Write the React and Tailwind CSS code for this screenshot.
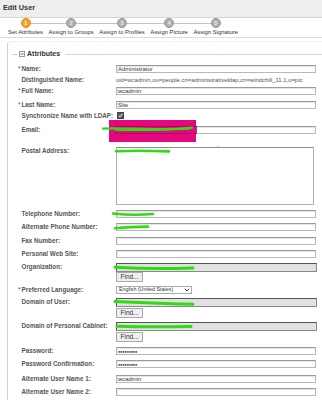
import React from 'react';

const steps = ['Set Attributes', 'Assign to Groups', 'Assign to Profiles', 'Assign Picture', 'Assign Signature'];

const Row = ({ label, req, h, children, labelClass = '' }) => (
  <div className={`flex items-start ${h}`}>
    <div className={`w-[108px] pl-[10px] flex text-[6.3px] font-bold text-[#555] leading-[8px] whitespace-nowrap ${labelClass}`}>
      <span className="w-[3.5px] text-[#555] font-normal">{req ? '*' : ''}</span>
      {label}
    </div>
    {children}
  </div>
);

const TextInput = ({ value }) => (
  <div className="h-[8px] w-[200px] border border-[#b8b8b8] border-t-[#9a9a9a] shadow-[inset_1px_1px_0_#e6e6e6] bg-white text-[5.9px] leading-[6px] pl-[1px] text-[#333] overflow-hidden">
    {value}
  </div>
);

const GrayInput = () => (
  <div className="h-[9px] w-[201px] bg-[#e1e1e1] border border-[#8a8a8a] border-t-[#555] border-l-[#555]" />
);

const FindButton = () => (
  <div className="h-[10px] w-[27px] bg-[#efefef] border border-[#a8a8a8] text-[6.5px] text-[#333] flex items-center justify-center leading-none">
    Find...
  </div>
);

const Circle = ({ n, active }) => (
  <div
    className={`w-[10px] h-[10px] rounded-full flex items-center justify-center text-[5px] font-bold leading-none ${
      active ? 'bg-[#f2a22c] border border-[#e08a10] text-white' : 'bg-[#b0b0b0] border border-[#949494] text-[#eee]'
    }`}
  >
    {n}
  </div>
);

export default function App() {
  return (
    <div className="relative w-[322px] h-[400px] overflow-hidden bg-white font-['Liberation_Sans',Arial,sans-serif]">
      <div className="h-[18px] bg-[#eeeeee] border-b border-[#d6d6d6] flex items-center pl-[3px] text-[7.3px] font-bold text-[#333]">
        Edit User
      </div>

      <div className="relative h-[20px] border-b border-[#dcdcdc]">
        <div className="absolute left-[26px] w-[191px] top-[5px] h-px bg-[#c4c4c4]" />
        <div className="relative flex gap-[5.5px] pl-[8px]">
          {steps.map((s, i) => (
            <div key={s} className="flex flex-col items-center">
              <Circle n={i + 1} active={i === 0} />
              <div className="text-[5.9px] leading-[8px] text-[#333] whitespace-nowrap">{s}</div>
            </div>
          ))}
        </div>
      </div>

      <div className="mt-[3px] ml-[7px] border-l border-t border-[#d0d0d0] border-t-[#f0f0f0] rounded-tl-[4px] pt-[8px] h-[400px]">
        <div className="flex items-center h-[8px] pl-[4px]">
          <div className="w-[6px] h-px bg-[#cfcfcf]" />
          <svg width="6" height="6" viewBox="0 0 6 6" className="ml-[1px]">
            <rect x="0.5" y="0.5" width="5" height="5" fill="white" stroke="#999" />
            <path d="M1.5 3h3" stroke="#666" />
          </svg>
          <span className="ml-[2px] text-[7px] font-bold text-[#333]">Attributes</span>
          <div className="ml-[5px] flex-1 h-px bg-[#d6d6d6]" />
        </div>

        <div className="mt-[7px] flex flex-col">
          <Row label="Name:" req h="h-[11px]">
            <TextInput value="Administrator" />
          </Row>
          <Row label="Distinguished Name:" h="h-[11px]">
            <div className="text-[5.9px] leading-[8px] text-[#555] whitespace-nowrap">
              uid=wcadmin,ou=people,cn=administrativeldap,cn=windchill_11.1,o=ptc
            </div>
          </Row>
          <Row label="Full Name:" req h="h-[14px]">
            <TextInput value="wcadmin" />
          </Row>
          <Row label="Last Name:" req h="h-[11px]">
            <TextInput value="Site" />
          </Row>
          <Row label="Synchronize Name with LDAP:" h="h-[14px]" labelClass="leading-[7px]">
            <svg width="7" height="7" viewBox="0 0 7 7" className="ml-px">
              <rect x="0.5" y="0.5" width="6" height="6" fill="#5a5a5a" stroke="#444" />
              <path d="M1.6 3.6l1.3 1.3 2.5-3" stroke="white" strokeWidth="1" fill="none" />
            </svg>
          </Row>
          <Row label="Email:" h="h-[21px]">
            <TextInput value="" />
          </Row>
          <Row label="Postal Address:" h="h-[63px]">
            <div className="h-[58px] w-[198px] border border-[#b0b0b0] border-t-[#8f8f8f] bg-white" />
          </Row>
          <Row label="Telephone Number:" h="h-[13px]">
            <TextInput value="" />
          </Row>
          <Row label="Alternate Phone Number:" h="h-[14px]">
            <TextInput value="" />
          </Row>
          <Row label="Fax Number:" h="h-[13px]">
            <TextInput value="" />
          </Row>
          <Row label="Personal Web Site:" h="h-[13px]">
            <TextInput value="" />
          </Row>
          <Row label="Organization:" h="h-[23px]">
            <div className="flex flex-col">
              <GrayInput />
              <FindButton />
            </div>
          </Row>
          <Row label="Preferred Language:" req h="h-[12px]">
            <div className="h-[8px] w-[76px] border border-[#aaa] bg-white flex items-center justify-between pl-[2px] pr-[1px] text-[5.3px] text-[#333] leading-none">
              <span>English (United States)</span>
              <svg width="6" height="4" viewBox="0 0 6 4">
                <path d="M0.8 0.8L3 3l2.2-2.2" stroke="#333" strokeWidth="0.9" fill="none" />
              </svg>
            </div>
          </Row>
          <Row label="Domain of User:" h="h-[24px]">
            <div className="flex flex-col gap-[1px]">
              <GrayInput />
              <FindButton />
            </div>
          </Row>
          <Row label="Domain of Personal Cabinet:" h="h-[25px]">
            <div className="flex flex-col gap-[1px]">
              <GrayInput />
              <FindButton />
            </div>
          </Row>
          <Row label="Password:" h="h-[13px]">
            <TextInput value={<span className="text-[4px] leading-[6px] tracking-[-0.3px]">●●●●●●●●●</span>} />
          </Row>
          <Row label="Password Confirmation:" h="h-[15px]">
            <TextInput value={<span className="text-[4px] leading-[6px] tracking-[-0.3px]">●●●●●●●●●</span>} />
          </Row>
          <Row label="Alternate User Name 1:" h="h-[13px]">
            <TextInput value="wcadmin" />
          </Row>
          <Row label="Alternate User Name 2:" h="h-[13px]">
            <TextInput value="" />
          </Row>
        </div>
      </div>

      <svg className="absolute left-0 top-0 pointer-events-none" width="322" height="400" viewBox="0 0 322 400">
        <rect x="109" y="120" width="87" height="22" fill="#e5077f" />
        <rect x="115.5" y="126.5" width="81" height="7" fill="none" stroke="#a3004f" strokeWidth="0.8" />
        <path d="M119 135.5q1.5-1.2 2.6 0q0.5 1-1 1.8v1" stroke="#d0102a" strokeWidth="0.8" fill="none" />
        <g stroke="#2fdc12" fill="none" strokeLinecap="round">
          <path d="M103 128.6C125 127.4 150 131.5 192 127.6" strokeWidth="2.4" />
          <path d="M115 130C140 130.8 165 130 190 128.6" strokeWidth="1.6" />
          <path d="M116 151.2Q140 150.2 169 151.4" strokeWidth="2.6" />
          <path d="M218 147h0.6" strokeWidth="1.2" />
          <path d="M113 213.5Q133 215.6 153 214" strokeWidth="2.6" />
          <path d="M115 228.2Q130 226.6 148 226.6" strokeWidth="2.6" />
          <path d="M115 267.2Q150 269.4 193 268" strokeWidth="3" />
          <path d="M115 301.6Q150 303.4 193 304.2" strokeWidth="3" />
          <path d="M117 326.2Q150 327.4 191 326.4" strokeWidth="3" />
        </g>
      </svg>
    </div>
  );
}
